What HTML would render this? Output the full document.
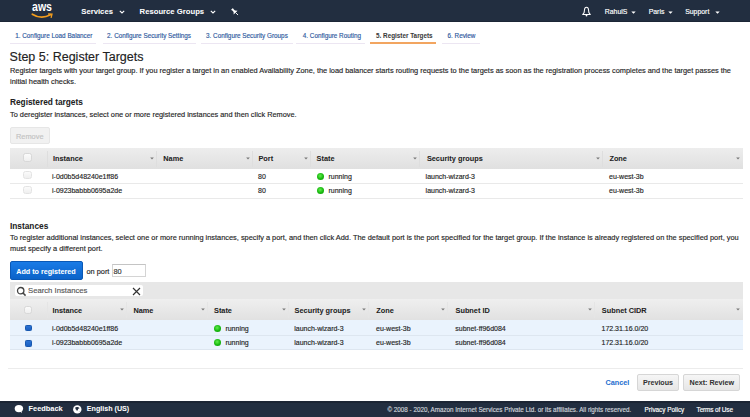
<!DOCTYPE html>
<html><head><meta charset="utf-8"><style>
html,body{margin:0;padding:0;width:750px;height:417px;overflow:hidden;background:#fff;}
body{position:relative;font-family:"Liberation Sans",sans-serif;}
.t{position:absolute;line-height:1;white-space:nowrap;-webkit-text-stroke:0.15px currentColor;}
.b{-webkit-text-stroke:0.04px currentColor;}
.r{position:absolute;}
</style></head><body>
<div class="r" style="left:0.00px;top:0.00px;width:750.00px;height:22.00px;background:#222e40"></div>
<div class="r" style="left:0.00px;top:20.80px;width:750.00px;height:1.00px;background:#1c2636"></div>
<svg class="r" style="left:30px;top:2px" width="26" height="18" viewBox="0 0 26 18"><text x="2" y="9.3" font-family="Liberation Sans" font-weight="700" font-size="12.6" fill="#fff" textLength="20" lengthAdjust="spacingAndGlyphs">aws</text><path d="M2.3 12.2 Q11 17.8 20.6 12.8" stroke="#f29d1e" stroke-width="1.7" fill="none" stroke-linecap="round"/><path d="M18.6 12 L22 12.2 L21.2 15.4" stroke="#f29d1e" stroke-width="1.3" fill="none" stroke-linecap="round"/></svg>
<div class="t b" style="left:81.30px;top:8.38px;font-size:7.7px;font-weight:700;color:#fff;">Services</div>
<div class="t b" style="left:139.60px;top:8.38px;font-size:7.7px;font-weight:700;color:#fff;">Resource Groups</div>
<svg class="r" style="left:118.8px;top:10px" width="6" height="4" viewBox="0 0 6 4"><path d="M0.8 0.8 L3 3 L5.2 0.8" stroke="#fff" stroke-width="1.1" fill="none"/></svg>
<svg class="r" style="left:209.8px;top:10px" width="6" height="4" viewBox="0 0 6 4"><path d="M0.8 0.8 L3 3 L5.2 0.8" stroke="#fff" stroke-width="1.1" fill="none"/></svg>
<svg class="r" style="left:229.8px;top:6.6px" width="10" height="10" viewBox="0 0 10 10"><g transform="translate(5,5) rotate(-45) scale(0.86) translate(-4,-5)"><path d="M2.3 0 L5.7 0 L5.1 1.2 L5.1 3.8 L7.2 6 L0.8 6 L2.9 3.8 L2.9 1.2 Z" fill="#fff"/><path d="M4 6 L4 10" stroke="#fff" stroke-width="1"/></g></svg>
<svg class="r" style="left:580.8px;top:5.8px" width="11" height="11" viewBox="0 0 11 11"><path d="M5.5 1.3 C4.3 1.3 3.6 2.3 3.5 3.8 L3.1 6.6 L1.7 8.5 L9.3 8.5 L7.9 6.6 L7.5 3.8 C7.4 2.3 6.7 1.3 5.5 1.3 Z" stroke="#fff" stroke-width="1.05" fill="none" stroke-linejoin="round"/><circle cx="5.5" cy="9.5" r="0.9" fill="#fff"/></svg>
<div class="t" style="left:604.80px;top:8.56px;font-size:6.9px;font-weight:400;color:#fff;">RahulS</div>
<div class="t" style="left:648.70px;top:8.56px;font-size:6.9px;font-weight:400;color:#fff;">Paris</div>
<div class="t" style="left:685.20px;top:8.56px;font-size:6.9px;font-weight:400;color:#fff;">Support</div>
<svg class="r" style="left:630.5px;top:10.6px" width="5" height="3" viewBox="0 0 5 3"><path d="M0.3 0.4 L4.7 0.4 L2.5 2.8 Z" fill="#fff"/></svg>
<svg class="r" style="left:667.5px;top:10.6px" width="5" height="3" viewBox="0 0 5 3"><path d="M0.3 0.4 L4.7 0.4 L2.5 2.8 Z" fill="#fff"/></svg>
<svg class="r" style="left:714.5px;top:10.6px" width="5" height="3" viewBox="0 0 5 3"><path d="M0.3 0.4 L4.7 0.4 L2.5 2.8 Z" fill="#fff"/></svg>
<div class="t" style="left:15.20px;top:32.92px;font-size:6.35px;font-weight:400;color:#2f5a9e;">1. Configure Load Balancer</div>
<div class="r" style="left:9.60px;top:42.50px;width:86.40px;height:1.00px;background:#ece6f2"></div>
<div class="t" style="left:107.10px;top:32.92px;font-size:6.35px;font-weight:400;color:#2f5a9e;">2. Configure Security Settings</div>
<div class="r" style="left:102.50px;top:42.50px;width:93.30px;height:1.00px;background:#ece6f2"></div>
<div class="t" style="left:206.00px;top:32.92px;font-size:6.35px;font-weight:400;color:#2f5a9e;">3. Configure Security Groups</div>
<div class="r" style="left:200.50px;top:42.50px;width:92.00px;height:1.00px;background:#ece6f2"></div>
<div class="t" style="left:302.80px;top:32.92px;font-size:6.35px;font-weight:400;color:#2f5a9e;">4. Configure Routing</div>
<div class="r" style="left:296.30px;top:42.50px;width:68.70px;height:1.00px;background:#ece6f2"></div>
<div class="t b" style="left:376.00px;top:32.92px;font-size:6.35px;font-weight:700;color:#3a3a3a;">5. Register Targets</div>
<div class="r" style="left:370.40px;top:42.10px;width:65.60px;height:1.90px;background:#f2a560"></div>
<div class="t" style="left:447.50px;top:32.92px;font-size:6.35px;font-weight:400;color:#2f5a9e;">6. Review</div>
<div class="r" style="left:441.50px;top:42.50px;width:38.10px;height:1.00px;background:#ece6f2"></div>
<div class="t" style="left:9.60px;top:51.42px;font-size:12.5px;font-weight:400;color:#222;">Step 5: Register Targets</div>
<div class="t" style="left:10.00px;top:66.85px;font-size:7.38px;font-weight:400;color:#262626;">Register targets with your target group. If you register a target in an enabled Availability Zone, the load balancer starts routing requests to the targets as soon as the registration process completes and the target passes the</div>
<div class="t" style="left:10.00px;top:77.65px;font-size:7.38px;font-weight:400;color:#262626;">initial health checks.</div>
<div class="t b" style="left:10.00px;top:97.77px;font-size:8.3px;font-weight:700;color:#222;">Registered targets</div>
<div class="t" style="left:10.00px;top:110.88px;font-size:7.35px;font-weight:400;color:#262626;">To deregister instances, select one or more registered instances and then click Remove.</div>
<div class="r" style="left:10.00px;top:127.00px;width:39.60px;height:17.40px;background:#f1f1f1;border:1px solid #e6e6e6;border-radius:2px;box-sizing:border-box"></div>
<div class="t" style="left:16.00px;top:132.94px;font-size:7.4px;font-weight:400;color:#c2c2c2;">Remove</div>
<div class="r" style="left:10.00px;top:148.20px;width:732.50px;height:21.20px;background:linear-gradient(#ededed,#e0e0e0)"></div>
<div class="r" style="left:23.00px;top:153.20px;width:9.40px;height:9.10px;background:linear-gradient(#fbfbfb,#efefef);border:1px solid #d8d8d8;border-radius:2.5px;box-sizing:border-box"></div>
<div class="t b" style="left:53.00px;top:154.58px;font-size:7.35px;font-weight:700;color:#222;">Instance</div>
<div class="t b" style="left:163.30px;top:154.58px;font-size:7.35px;font-weight:700;color:#222;">Name</div>
<div class="t b" style="left:258.40px;top:154.58px;font-size:7.35px;font-weight:700;color:#222;">Port</div>
<div class="t b" style="left:316.60px;top:154.58px;font-size:7.35px;font-weight:700;color:#222;">State</div>
<div class="t b" style="left:426.90px;top:154.58px;font-size:7.35px;font-weight:700;color:#222;">Security groups</div>
<div class="t b" style="left:609.40px;top:154.58px;font-size:7.35px;font-weight:700;color:#222;">Zone</div>
<svg class="r" style="left:149.9px;top:156.5px" width="4" height="3" viewBox="0 0 4 3"><path d="M0.2 0.5 L3.8 0.5 L2 2.6 Z" fill="#777"/></svg>
<svg class="r" style="left:245.7px;top:156.5px" width="4" height="3" viewBox="0 0 4 3"><path d="M0.2 0.5 L3.8 0.5 L2 2.6 Z" fill="#777"/></svg>
<svg class="r" style="left:303.7px;top:156.5px" width="4" height="3" viewBox="0 0 4 3"><path d="M0.2 0.5 L3.8 0.5 L2 2.6 Z" fill="#777"/></svg>
<svg class="r" style="left:413px;top:156.5px" width="4" height="3" viewBox="0 0 4 3"><path d="M0.2 0.5 L3.8 0.5 L2 2.6 Z" fill="#777"/></svg>
<svg class="r" style="left:596px;top:156.5px" width="4" height="3" viewBox="0 0 4 3"><path d="M0.2 0.5 L3.8 0.5 L2 2.6 Z" fill="#777"/></svg>
<svg class="r" style="left:736px;top:156.5px" width="4" height="3" viewBox="0 0 4 3"><path d="M0.2 0.5 L3.8 0.5 L2 2.6 Z" fill="#777"/></svg>
<div class="r" style="left:46.50px;top:151.00px;width:0.70px;height:16.00px;background:#dedede"></div>
<div class="r" style="left:155.90px;top:151.00px;width:0.70px;height:16.00px;background:#dedede"></div>
<div class="r" style="left:251.70px;top:151.00px;width:0.70px;height:16.00px;background:#dedede"></div>
<div class="r" style="left:309.70px;top:151.00px;width:0.70px;height:16.00px;background:#dedede"></div>
<div class="r" style="left:419.00px;top:151.00px;width:0.70px;height:16.00px;background:#dedede"></div>
<div class="r" style="left:602.00px;top:151.00px;width:0.70px;height:16.00px;background:#dedede"></div>
<div class="r" style="left:10.00px;top:182.70px;width:732.50px;height:1.00px;background:#e9e9e9"></div>
<div class="r" style="left:23.00px;top:171.20px;width:9.40px;height:8.30px;background:linear-gradient(#fbfbfb,#efefef);border:1px solid #e3e3e3;border-radius:2.5px;box-sizing:border-box"></div>
<div class="t" style="left:52.00px;top:172.67px;font-size:7px;font-weight:400;color:#262626;">i-0d0b5d48240e1ff86</div>
<div class="t" style="left:258.00px;top:172.67px;font-size:7px;font-weight:400;color:#262626;">80</div>
<div class="r" style="left:316.6px;top:172.70px;width:7.4px;height:7.4px;border-radius:50%;background:radial-gradient(circle at 45% 40%,#62ec4c,#16b80e 55%,#0d9207)"></div>
<div class="t" style="left:328.50px;top:172.67px;font-size:7px;font-weight:400;color:#262626;">running</div>
<div class="t" style="left:425.60px;top:172.67px;font-size:7px;font-weight:400;color:#262626;">launch-wizard-3</div>
<div class="t" style="left:609.00px;top:172.67px;font-size:7px;font-weight:400;color:#262626;">eu-west-3b</div>
<div class="r" style="left:10.00px;top:197.60px;width:732.50px;height:1.00px;background:#e9e9e9"></div>
<div class="r" style="left:23.00px;top:185.50px;width:9.40px;height:8.30px;background:linear-gradient(#fbfbfb,#efefef);border:1px solid #e3e3e3;border-radius:2.5px;box-sizing:border-box"></div>
<div class="t" style="left:52.00px;top:187.07px;font-size:7px;font-weight:400;color:#262626;">i-0923babbb0695a2de</div>
<div class="t" style="left:258.00px;top:187.07px;font-size:7px;font-weight:400;color:#262626;">80</div>
<div class="r" style="left:316.6px;top:187.10px;width:7.4px;height:7.4px;border-radius:50%;background:radial-gradient(circle at 45% 40%,#62ec4c,#16b80e 55%,#0d9207)"></div>
<div class="t" style="left:328.50px;top:187.07px;font-size:7px;font-weight:400;color:#262626;">running</div>
<div class="t" style="left:425.60px;top:187.07px;font-size:7px;font-weight:400;color:#262626;">launch-wizard-3</div>
<div class="t" style="left:609.00px;top:187.07px;font-size:7px;font-weight:400;color:#262626;">eu-west-3b</div>
<div class="t b" style="left:10.00px;top:221.67px;font-size:8.3px;font-weight:700;color:#222;">Instances</div>
<div class="t" style="left:10.00px;top:233.94px;font-size:7.4px;font-weight:400;color:#262626;">To register additional instances, select one or more running instances, specify a port, and then click Add. The default port is the port specified for the target group. If the instance is already registered on the specified port, you</div>
<div class="t" style="left:10.00px;top:245.15px;font-size:7.38px;font-weight:400;color:#262626;">must specify a different port.</div>
<div class="r" style="left:10.00px;top:261.00px;width:73.00px;height:19.20px;background:linear-gradient(#1a7be6,#0b63c9);border:1px solid #0a58b5;border-radius:2px;box-sizing:border-box"></div>
<div class="t b" style="left:16.20px;top:267.61px;font-size:7.2px;font-weight:700;color:#fff;">Add to registered</div>
<div class="t" style="left:86.40px;top:268.04px;font-size:7.4px;font-weight:400;color:#262626;">on port</div>
<div class="r" style="left:112.00px;top:264.30px;width:34.00px;height:13.10px;background:#fff;border:1px solid #d4d4d4;border-top-color:#c4c4c4;box-sizing:border-box"></div>
<div class="t" style="left:113.40px;top:268.04px;font-size:7.4px;font-weight:400;color:#333;">80</div>
<div class="r" style="left:10.00px;top:281.50px;width:732.50px;height:17.10px;background:#e7e7e7"></div>
<div class="r" style="left:14.60px;top:284.60px;width:128.60px;height:11.60px;background:#fff;border-radius:2px"></div>
<svg class="r" style="left:16px;top:285.6px" width="11" height="11" viewBox="0 0 11 11"><circle cx="4.7" cy="4.7" r="3.2" stroke="#444" stroke-width="1.3" fill="none"/><path d="M7 7 L9.6 9.6" stroke="#444" stroke-width="1.5"/></svg>
<div class="t" style="left:28.00px;top:287.18px;font-size:7.7px;font-weight:400;color:#555;">Search Instances</div>
<svg class="r" style="left:132px;top:286.5px" width="9" height="9" viewBox="0 0 9 9"><path d="M1 1 L8 8 M8 1 L1 8" stroke="#333" stroke-width="1.2"/></svg>
<div class="r" style="left:10.00px;top:298.60px;width:732.50px;height:21.60px;background:linear-gradient(#efefef,#e1e1e1)"></div>
<div class="r" style="left:24.00px;top:305.50px;width:8.20px;height:8.20px;background:linear-gradient(#fbfbfb,#efefef);border:1px solid #d8d8d8;border-radius:2.5px;box-sizing:border-box"></div>
<div class="t b" style="left:52.40px;top:306.98px;font-size:7.35px;font-weight:700;color:#222;">Instance</div>
<div class="t b" style="left:133.40px;top:306.98px;font-size:7.35px;font-weight:700;color:#222;">Name</div>
<div class="t b" style="left:214.00px;top:306.98px;font-size:7.35px;font-weight:700;color:#222;">State</div>
<div class="t b" style="left:294.60px;top:306.98px;font-size:7.35px;font-weight:700;color:#222;">Security groups</div>
<div class="t b" style="left:376.30px;top:306.98px;font-size:7.35px;font-weight:700;color:#222;">Zone</div>
<div class="t b" style="left:455.50px;top:306.98px;font-size:7.35px;font-weight:700;color:#222;">Subnet ID</div>
<div class="t b" style="left:601.80px;top:306.98px;font-size:7.35px;font-weight:700;color:#222;">Subnet CIDR</div>
<svg class="r" style="left:119.5px;top:308.0px" width="4" height="3" viewBox="0 0 4 3"><path d="M0.2 0.5 L3.8 0.5 L2 2.6 Z" fill="#777"/></svg>
<svg class="r" style="left:200.7px;top:308.0px" width="4" height="3" viewBox="0 0 4 3"><path d="M0.2 0.5 L3.8 0.5 L2 2.6 Z" fill="#777"/></svg>
<svg class="r" style="left:281.7px;top:308.0px" width="4" height="3" viewBox="0 0 4 3"><path d="M0.2 0.5 L3.8 0.5 L2 2.6 Z" fill="#777"/></svg>
<svg class="r" style="left:362px;top:308.0px" width="4" height="3" viewBox="0 0 4 3"><path d="M0.2 0.5 L3.8 0.5 L2 2.6 Z" fill="#777"/></svg>
<svg class="r" style="left:441.4px;top:308.0px" width="4" height="3" viewBox="0 0 4 3"><path d="M0.2 0.5 L3.8 0.5 L2 2.6 Z" fill="#777"/></svg>
<svg class="r" style="left:588.4px;top:308.0px" width="4" height="3" viewBox="0 0 4 3"><path d="M0.2 0.5 L3.8 0.5 L2 2.6 Z" fill="#777"/></svg>
<svg class="r" style="left:736px;top:308.0px" width="4" height="3" viewBox="0 0 4 3"><path d="M0.2 0.5 L3.8 0.5 L2 2.6 Z" fill="#777"/></svg>
<div class="r" style="left:46.50px;top:302.00px;width:0.70px;height:16.00px;background:#e5e5e5"></div>
<div class="r" style="left:125.50px;top:302.00px;width:0.70px;height:16.00px;background:#e5e5e5"></div>
<div class="r" style="left:206.70px;top:302.00px;width:0.70px;height:16.00px;background:#e5e5e5"></div>
<div class="r" style="left:287.70px;top:302.00px;width:0.70px;height:16.00px;background:#e5e5e5"></div>
<div class="r" style="left:368.00px;top:302.00px;width:0.70px;height:16.00px;background:#e5e5e5"></div>
<div class="r" style="left:447.40px;top:302.00px;width:0.70px;height:16.00px;background:#e5e5e5"></div>
<div class="r" style="left:594.40px;top:302.00px;width:0.70px;height:16.00px;background:#e5e5e5"></div>
<div class="r" style="left:10.00px;top:320.20px;width:732.50px;height:15.40px;background:#eaf3fd"></div>
<div class="r" style="left:10.00px;top:334.60px;width:732.50px;height:1.00px;background:#dde6f0"></div>
<div class="r" style="left:25.00px;top:324.60px;width:6.90px;height:6.60px;background:linear-gradient(#2a72d4,#1a60c2);border:1px solid #1758b0;border-radius:1.2px;box-sizing:border-box"></div>
<div class="t" style="left:52.00px;top:324.57px;font-size:7px;font-weight:400;color:#262626;">i-0d0b5d48240e1ff86</div>
<div class="r" style="left:214px;top:324.60px;width:7.4px;height:7.4px;border-radius:50%;background:radial-gradient(circle at 45% 40%,#62ec4c,#16b80e 55%,#0d9207)"></div>
<div class="t" style="left:225.40px;top:324.57px;font-size:7px;font-weight:400;color:#262626;">running</div>
<div class="t" style="left:294.20px;top:324.57px;font-size:7px;font-weight:400;color:#262626;">launch-wizard-3</div>
<div class="t" style="left:376.00px;top:324.57px;font-size:7px;font-weight:400;color:#262626;">eu-west-3b</div>
<div class="t" style="left:455.30px;top:324.57px;font-size:7px;font-weight:400;color:#262626;">subnet-ff96d084</div>
<div class="t" style="left:601.50px;top:324.57px;font-size:7px;font-weight:400;color:#262626;">172.31.16.0/20</div>
<div class="r" style="left:10.00px;top:335.60px;width:732.50px;height:14.80px;background:#eaf3fd"></div>
<div class="r" style="left:10.00px;top:349.40px;width:732.50px;height:1.00px;background:#dde6f0"></div>
<div class="r" style="left:25.00px;top:340.00px;width:6.90px;height:6.60px;background:linear-gradient(#2a72d4,#1a60c2);border:1px solid #1758b0;border-radius:1.2px;box-sizing:border-box"></div>
<div class="t" style="left:52.00px;top:339.07px;font-size:7px;font-weight:400;color:#262626;">i-0923babbb0695a2de</div>
<div class="r" style="left:214px;top:339.10px;width:7.4px;height:7.4px;border-radius:50%;background:radial-gradient(circle at 45% 40%,#62ec4c,#16b80e 55%,#0d9207)"></div>
<div class="t" style="left:225.40px;top:339.07px;font-size:7px;font-weight:400;color:#262626;">running</div>
<div class="t" style="left:294.20px;top:339.07px;font-size:7px;font-weight:400;color:#262626;">launch-wizard-3</div>
<div class="t" style="left:376.00px;top:339.07px;font-size:7px;font-weight:400;color:#262626;">eu-west-3b</div>
<div class="t" style="left:455.30px;top:339.07px;font-size:7px;font-weight:400;color:#262626;">subnet-ff96d084</div>
<div class="t" style="left:601.50px;top:339.07px;font-size:7px;font-weight:400;color:#262626;">172.31.16.0/20</div>
<div class="r" style="left:8.00px;top:367.60px;width:735.00px;height:1.20px;background:#ececec"></div>
<div class="t b" style="left:605.60px;top:379.05px;font-size:7.26px;font-weight:700;color:#1f6fd0;">Cancel</div>
<div class="r" style="left:636.70px;top:374.30px;width:41.90px;height:16.50px;background:linear-gradient(#f6f6f6,#e6e6e6);border:1px solid #d6d6d6;border-radius:2px;box-sizing:border-box"></div>
<div class="t b" style="left:643.00px;top:379.99px;font-size:7.1px;font-weight:700;color:#333;">Previous</div>
<div class="r" style="left:683.20px;top:374.30px;width:56.70px;height:16.50px;background:linear-gradient(#f6f6f6,#e6e6e6);border:1px solid #d6d6d6;border-radius:2px;box-sizing:border-box"></div>
<div class="t b" style="left:689.50px;top:379.92px;font-size:7.18px;font-weight:700;color:#333;">Next: Review</div>
<div class="r" style="left:0.00px;top:401.20px;width:750.00px;height:15.80px;background:#222e40"></div>
<div class="r" style="left:0.00px;top:401.20px;width:750.00px;height:1.40px;background:#1c2534"></div>
<svg class="r" style="left:14px;top:404px" width="10" height="10" viewBox="0 0 10 10"><ellipse cx="4.9" cy="4.6" rx="4.2" ry="3.6" fill="#fff"/><path d="M5.6 7 L8 9.2 L7.2 6.4 Z" fill="#fff"/></svg>
<div class="t b" style="left:28.60px;top:405.44px;font-size:7.4px;font-weight:700;color:#fff;">Feedback</div>
<svg class="r" style="left:73px;top:404.5px" width="9" height="9" viewBox="0 0 9 9"><circle cx="4.3" cy="4.4" r="4.2" fill="#fff"/><path d="M2.2 2.6 Q3.2 1.6 4.6 2 Q6.2 2.2 6.6 3.2 L5.8 3.6 Q5 4 4.8 5 Q4.6 6 3.8 5.8 Q3.4 4.6 2.6 4.2 Z" fill="#222e40"/><path d="M5.6 6.6 Q6.4 6.2 6.8 6.8 Q6.2 7.4 5.6 6.6 Z" fill="#222e40" opacity="0.6"/></svg>
<div class="t b" style="left:86.80px;top:405.65px;font-size:7.15px;font-weight:700;color:#fff;">English (US)</div>
<div class="t" style="left:387.50px;top:406.68px;font-size:6.29px;font-weight:400;color:#cfd4da;">© 2008 - 2020, Amazon Internet Services Private Ltd. or its affiliates. All rights reserved.</div>
<div class="t" style="left:644.60px;top:406.60px;font-size:6.38px;font-weight:400;color:#fff;">Privacy Policy</div>
<div class="t" style="left:696.60px;top:406.54px;font-size:6.45px;font-weight:400;color:#fff;letter-spacing:-0.14px">Terms of Use</div>
</body></html>
